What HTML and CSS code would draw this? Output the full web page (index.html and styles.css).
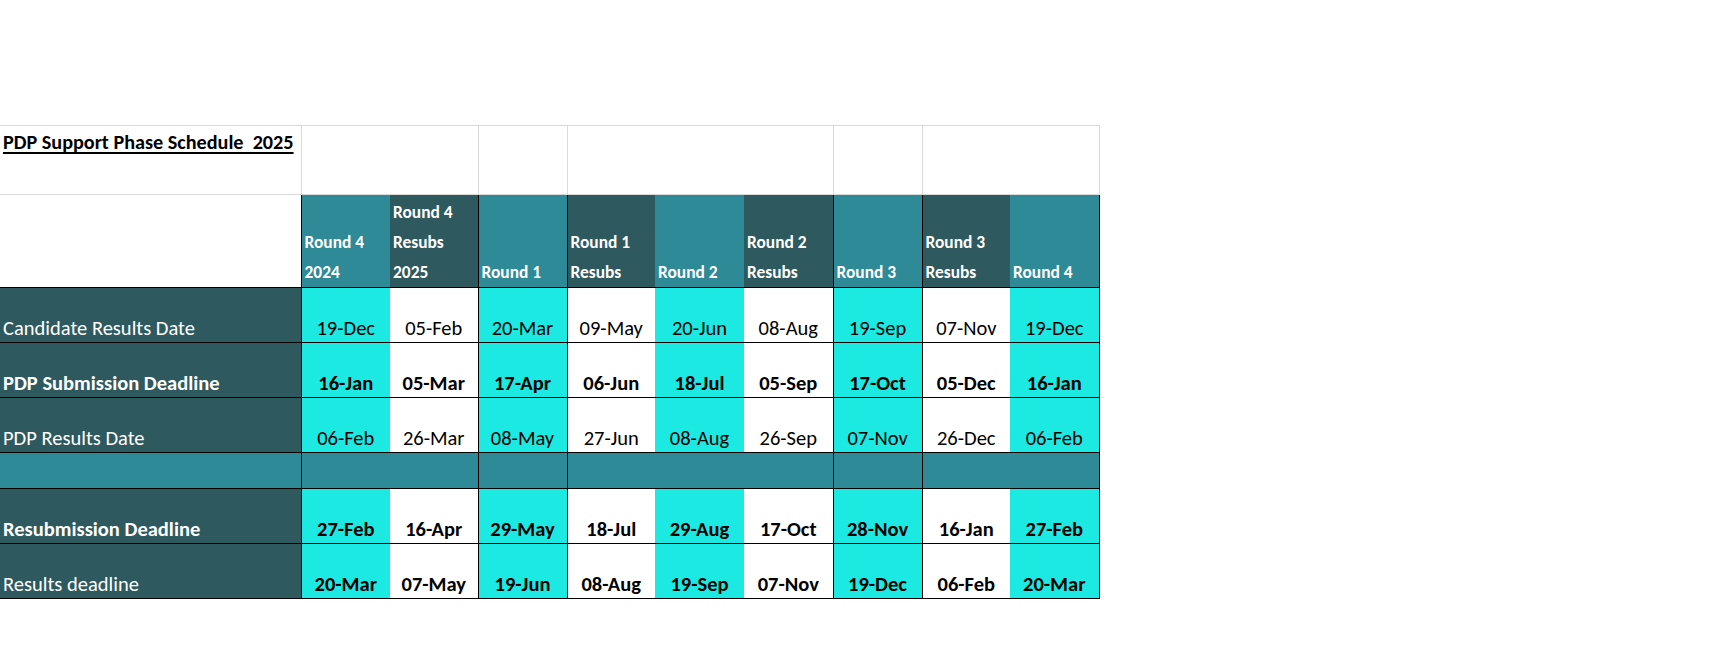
FILE: index.html
```html
<!DOCTYPE html>
<html lang="en">
<head>
<meta charset="utf-8">
<title>PDP Support Phase Schedule 2025</title>
<link rel="stylesheet" href="styles.css">
</head>
<body>
<div class="sheet">
<table class="sched">
  <colgroup>
    <col class="w-label">
    <col class="w89"><col class="w88"><col class="w89"><col class="w88"><col class="w89">
    <col class="w89"><col class="w89"><col class="w88"><col class="w89">
  </colgroup>
  <tr class="r-title">
    <td class="title-cell"><span class="title">PDP Support Phase Schedule  2025</span></td>
    <td colspan="2"></td>
    <td></td>
    <td colspan="3"></td>
    <td></td>
    <td colspan="2"></td>
  </tr>
  <tr class="r-head">
    <td class="blank"></td>
    <th class="teal gl">Round 4<br>2024</th>
    <th class="dark">Round 4<br>Resubs<br>2025</th>
    <th class="teal gl">Round 1</th>
    <th class="dark gl">Round 1<br>Resubs</th>
    <th class="teal">Round 2</th>
    <th class="dark">Round 2<br>Resubs</th>
    <th class="teal gl">Round 3</th>
    <th class="dark gl">Round 3<br>Resubs</th>
    <th class="teal gr">Round 4</th>
  </tr>
  <tr class="r-data">
    <td class="label">Candidate Results Date</td>
    <td class="cy gl">19-Dec</td><td class="wh">05-Feb</td>
    <td class="cy gl">20-Mar</td>
    <td class="wh gl">09-May</td><td class="cy">20-Jun</td><td class="wh sel">08-Aug</td>
    <td class="cy gl">19-Sep</td>
    <td class="wh gl">07-Nov</td><td class="cy gr">19-Dec</td>
  </tr>
  <tr class="r-data bold">
    <td class="label">PDP Submission Deadline</td>
    <td class="cy gl">16-Jan</td><td class="wh">05-Mar</td>
    <td class="cy gl">17-Apr</td>
    <td class="wh gl">06-Jun</td><td class="cy">18-Jul</td><td class="wh">05-Sep</td>
    <td class="cy gl">17-Oct</td>
    <td class="wh gl">05-Dec</td><td class="cy gr">16-Jan</td>
  </tr>
  <tr class="r-data">
    <td class="label">PDP Results Date</td>
    <td class="cy gl">06-Feb</td><td class="wh">26-Mar</td>
    <td class="cy gl">08-May</td>
    <td class="wh gl">27-Jun</td><td class="cy">08-Aug</td><td class="wh">26-Sep</td>
    <td class="cy gl">07-Nov</td>
    <td class="wh gl">26-Dec</td><td class="cy gr">06-Feb</td>
  </tr>
  <tr class="r-gap">
    <td></td>
    <td colspan="2" class="gl"></td>
    <td class="gl"></td>
    <td colspan="3" class="gl"></td>
    <td class="gl"></td>
    <td colspan="2" class="gl gr"></td>
  </tr>
  <tr class="r-data bold">
    <td class="label">Resubmission Deadline</td>
    <td class="cy gl">27-Feb</td><td class="wh">16-Apr</td>
    <td class="cy gl">29-May</td>
    <td class="wh gl">18-Jul</td><td class="cy">29-Aug</td><td class="wh">17-Oct</td>
    <td class="cy gl">28-Nov</td>
    <td class="wh gl">16-Jan</td><td class="cy gr">27-Feb</td>
  </tr>
  <tr class="r-data bold">
    <td class="label normal">Results deadline</td>
    <td class="cy gl">20-Mar</td><td class="wh">07-May</td>
    <td class="cy gl">19-Jun</td>
    <td class="wh gl">08-Aug</td><td class="cy">19-Sep</td><td class="wh">07-Nov</td>
    <td class="cy gl">19-Dec</td>
    <td class="wh gl">06-Feb</td><td class="cy gr">20-Mar</td>
  </tr>
</table>
</div>
</body>
</html>
```

FILE: styles.css
```css
html, body {
  margin: 0;
  padding: 0;
  background: #ffffff;
}

.sheet {
  padding-top: 125px;
  font-family: Carlito, Calibri, "Liberation Sans Narrow", "Open Sans", sans-serif;
  color: #000;
}

.sched {
  border-collapse: collapse;
  table-layout: fixed;
  width: 1099px;
}

.w-label { width: 301px; }
.w89 { width: 89px; }
.w88 { width: 88px; }

.sched td,
.sched th {
  padding: 0;
  margin: 0;
  border: none;
}

/* title row with spreadsheet gridlines */
.r-title td {
  height: 64px;
  border: 1px solid #dadada;
  border-left: none;
  vertical-align: top;
}

.r-title td:last-child {
  border-right: 1px solid #dadada;
}

.title-cell {
  padding: 4px 0 0 3px !important;
}

.title {
  font-size: 20.2px;
  font-weight: 700;
  text-decoration: underline;
  text-underline-offset: 3px;
  text-decoration-thickness: 2px;
  white-space: pre;
}

/* header row */
.r-head td,
.r-head th {
  height: 92px;
  vertical-align: bottom;
  text-align: left;
  border-top: 1px solid #000;
  border-bottom: 1px solid #000;
  font-size: 17.4px;
  font-weight: 700;
  line-height: 30px;
  color: #ffffff;
  padding: 0 0 0 3px;
}

.r-head .blank {
  background: #ffffff;
  border-top: 1px solid #dadada;
}

.teal { background: #2f8a98; }
.dark { background: #2e595e; }

.gl { border-left: 1px solid #000 !important; }
.gr { border-right: 1px solid #000 !important; }

/* data rows */
.r-data td {
  height: 52px;
  vertical-align: bottom;
  text-align: center;
  font-size: 20.5px;
  line-height: 24px;
  padding: 0 0 2px 0;
  border-bottom: 1px solid #000;
}

.r-data .label {
  text-align: left;
  background: #2e595e;
  color: #ffffff;
  padding-left: 3px;
}

.bold td { font-weight: 700; }
.bold td.normal { font-weight: 400; }

.cy { background: #1de9e3; }
.wh { background: #ffffff; }

.sel {
  border-top: 2px solid #000;
  border-left: 1px solid #000;
}

/* spacer row */
.r-gap td {
  height: 35px;
  background: #2f8a98;
  border-bottom: 1px solid #000;
}
```
